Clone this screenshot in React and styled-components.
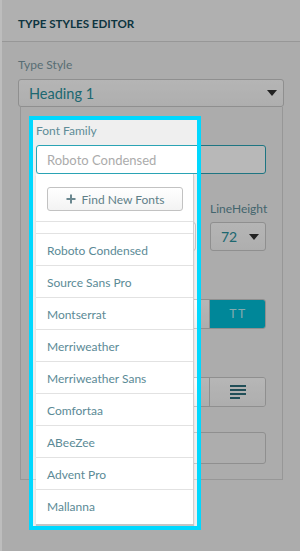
import React from "react";
import styled, { createGlobalStyle } from "styled-components";

const GlobalStyle = createGlobalStyle`
  html, body {
    margin: 0;
    padding: 0;
    background: #efefef;
  }
  * {
    box-sizing: border-box;
  }
`;

const fonts = [
  "Roboto Condensed",
  "Source Sans Pro",
  "Montserrat",
  "Merriweather",
  "Merriweather Sans",
  "Comfortaa",
  "ABeeZee",
  "Advent Pro",
  "Mallanna",
];

const App = () => {
  return (
    <>
      <GlobalStyle />
      <Editor>
        <Header>TYPE STYLES EDITOR</Header>
        <Body>
          <Label>Type Style</Label>
          <Select>
            <SelectValue>Heading 1</SelectValue>
            <Caret />
          </Select>
          <Details>
            <FieldLabel>Font Family</FieldLabel>
            <FontField>
              <FontInput placeholder="Roboto Condensed" readOnly />
              <FontMenu>
                <MenuTop>
                  <FindButton>
                    <PlusIcon width="10" height="10" viewBox="0 0 10 10">
                      <path d="M5 0.5v9M0.5 5h9" stroke="currentColor" strokeWidth="2" />
                    </PlusIcon>
                    Find New Fonts
                  </FindButton>
                </MenuTop>
                <MenuGap />
                {fonts.map((f) => (
                  <MenuItem key={f}>{f}</MenuItem>
                ))}
              </FontMenu>
            </FontField>

            <Row $mt={26}>
              <Column>
                <FieldLabel />
                <SmallSelect>
                  <Caret $small />
                </SmallSelect>
              </Column>
              <Column $w={56}>
                <FieldLabel>LineHeight</FieldLabel>
                <SmallSelect>
                  <SelectValue $size={14}>72</SelectValue>
                  <Caret $small />
                </SmallSelect>
              </Column>
            </Row>

            <Row $mt={48}>
              <Toggle>
                <ToggleButton />
                <ToggleButton />
                <ToggleButton $active>TT</ToggleButton>
              </Toggle>
            </Row>

            <Row $mt={48}>
              <Toggle>
                <ToggleButton />
                <ToggleButton />
                <ToggleButton>
                  <svg width="16" height="14" viewBox="0 0 16 14">
                    <g fill="#2f6e7a">
                      <rect x="0" y="0" width="16" height="2" />
                      <rect x="0" y="4" width="16" height="2" />
                      <rect x="0" y="8" width="16" height="2" />
                      <rect x="0" y="12" width="10" height="2" />
                    </g>
                  </svg>
                </ToggleButton>
              </Toggle>
            </Row>

            <Preview />
          </Details>
        </Body>
        <Spotlight />
      </Editor>
    </>
  );
};

const Editor = styled.div`
  position: relative;
  width: 300px;
  height: 551px;
  overflow: hidden;
  background: #efefef;
  border-left: 2px solid #bdbdbd;
  font-family: "Lato", "Open Sans", sans-serif;
`;

const Header = styled.div`
  height: 42px;
  padding: 17px 0 0 16px;
  background: #f4f4f4;
  border-bottom: 1px solid #d2d2d2;
  color: #134a59;
  font-size: 11.6px;
  line-height: 14px;
  font-weight: 700;
`;

const Body = styled.div`
  padding: 14px 16px 0 16px;
`;

const Label = styled.div`
  height: 18px;
  line-height: 18px;
  font-size: 12px;
  color: #7a98a1;
`;

const Select = styled.div`
  margin-top: 5px;
  height: 28px;
  border: 1px solid #c6c6c6;
  border-radius: 3px;
  background: linear-gradient(#fbfbfb, #f2f2f2);
  display: flex;
  align-items: center;
  justify-content: space-between;
  padding: 0 6px 0 10px;
`;

const SelectValue = styled.span`
  font-size: ${(p) => p.$size || 14.5}px;
  color: #2a909c;
`;

const Caret = styled.span`
  margin-left: auto;
  width: 0;
  height: 0;
  border-left: ${(p) => (p.$small ? 5 : 5.5)}px solid transparent;
  border-right: ${(p) => (p.$small ? 5 : 5.5)}px solid transparent;
  border-top: 6px solid #303030;
`;

const Details = styled.div`
  margin: 0 1px 0 2px;
  height: 373px;
  border: 1px solid #d2d2d2;
  border-top: none;
  padding: 15px 16px 0 15px;
`;

const FieldLabel = styled.div`
  height: 18px;
  line-height: 18px;
  font-size: 12px;
  color: #5e8c97;
`;

const FontField = styled.div`
  position: relative;
  margin-top: 5px;
`;

const FontInput = styled.input`
  display: block;
  width: 100%;
  height: 29px;
  border: 1px solid #2aa3b4;
  border-radius: 3px;
  background: #ffffff;
  padding: 0 10px;
  font-family: "Lato", "Open Sans", sans-serif;
  font-size: 13px;
  outline: none;
  &::placeholder {
    color: #ababab;
  }
`;

const FontMenu = styled.div`
  position: absolute;
  top: 100%;
  left: 0;
  width: 158px;
  height: 350px;
  background: #ffffff;
  border-right: 1px solid #cfcfcf;
  box-shadow: 0 2px 1px rgba(0, 0, 0, 0.18);
  z-index: 2;
  overflow: hidden;
`;

const MenuTop = styled.div`
  height: 48px;
  padding: 13px 10px 0 11px;
  border-bottom: 1px solid #e2e2e2;
`;

const FindButton = styled.div`
  height: 24px;
  border: 1px solid #c2c2c2;
  border-radius: 3px;
  background: linear-gradient(#ffffff, #f3f3f3);
  display: flex;
  align-items: center;
  justify-content: center;
  gap: 6px;
  font-size: 12px;
  color: #5f7f88;
`;

const PlusIcon = styled.svg`
  color: #6b8890;
`;

const MenuGap = styled.div`
  height: 12px;
  border-bottom: 1px solid #e2e2e2;
`;

const MenuItem = styled.div`
  height: 32px;
  line-height: 33px;
  padding-left: 11px;
  border-bottom: 1px solid #e2e2e2;
  font-size: 12px;
  color: #5b8a96;
  &:last-child {
    border-bottom: none;
  }
`;

const Row = styled.div`
  margin-top: ${(p) => p.$mt}px;
  display: flex;
  justify-content: flex-end;
  gap: 14px;
`;

const Column = styled.div`
  width: ${(p) => (p.$w ? `${p.$w}px` : "auto")};
  flex: ${(p) => (p.$w ? "none" : "1")};
  display: flex;
  flex-direction: column;
  gap: 4px;
`;

const SmallSelect = styled(Select)`
  margin-top: 0;
  height: 29px;
  padding: 0 6px 0 10px;
`;

const Toggle = styled.div`
  display: flex;
  height: 30px;
  width: 168px;
  border: 1px solid #c6c6c6;
  border-radius: 3px;
  overflow: hidden;
`;

const ToggleButton = styled.div`
  flex: 1;
  display: flex;
  align-items: center;
  justify-content: center;
  background: ${(p) => (p.$active ? "#00bcd4" : "linear-gradient(#fdfdfd, #f1f1f1)")};
  color: ${(p) => (p.$active ? "rgba(255,255,255,0.72)" : "#2f6e7a")};
  border-left: 1px solid #c6c6c6;
  font-family: "Liberation Mono", monospace;
  font-size: 13px;
  letter-spacing: 1px;
  &:first-child {
    border-left: none;
  }
`;

const Preview = styled.div`
  margin-top: 25px;
  margin-left: auto;
  width: 200px;
  height: 32px;
  border: 1px solid #c6c6c6;
  border-radius: 3px;
  background: #f0f0f0;
`;

const Spotlight = styled.div`
  position: absolute;
  left: 27px;
  top: 116px;
  width: 172px;
  height: 414px;
  border: 4px solid #00d8ff;
  box-shadow: 0 0 0 700px rgba(0, 0, 0, 0.28);
  pointer-events: none;
  z-index: 10;
`;

export default App;
